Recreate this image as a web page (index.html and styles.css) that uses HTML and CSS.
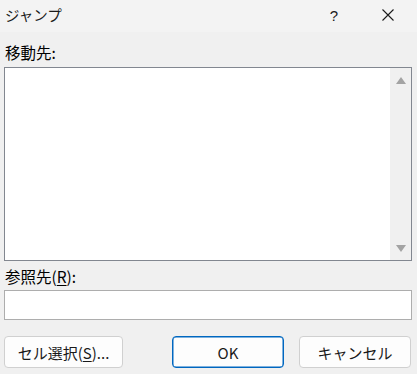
FILE: index.html
```html
<!DOCTYPE html>
<html lang="ja">
<head>
<meta charset="utf-8">
<link rel="stylesheet" href="styles.css">
</head>
<body>
<div class="dialog">
  <div class="titlebar">
    <span class="title">ジャンプ</span>
    <span class="help">?</span>
    <span class="close"><svg width="12" height="12" viewBox="0 0 12 12"><path d="M0.5 0.5 L11.5 11.5 M11.5 0.5 L0.5 11.5" stroke="#1a1a1a" stroke-width="1.1" fill="none"/></svg></span>
  </div>
  <div class="content">
    <div class="label">移動先:</div>
    <div class="listbox">
      <div class="listarea"></div>
      <div class="scrollbar">
        <svg width="10" height="7" viewBox="0 0 10 7"><path d="M5 0 L10 7 L0 7 Z" fill="#a3a3a3"/></svg>
        <svg width="10" height="7" viewBox="0 0 10 7"><path d="M0 0 L10 0 L5 7 Z" fill="#a3a3a3"/></svg>
      </div>
    </div>
    <div class="label ref">参照先(<u>R</u>):</div>
    <div class="input"></div>
    <div class="buttons">
      <button class="btn sel">セル選択(<u>S</u>)...</button>
      <button class="btn ok">OK</button>
      <button class="btn cancel">キャンセル</button>
    </div>
  </div>
</div>
</body>
</html>
```

FILE: styles.css
```css
html, body {
  margin: 0;
  padding: 0;
  background: #f0f0f0;
}
body {
  font-family: "Noto Sans CJK JP", "Noto Sans", sans-serif;
  color: #000;
  width: 417px;
  height: 374px;
  overflow: hidden;
}
.dialog {
  width: 417px;
  height: 374px;
  display: flex;
  flex-direction: column;
}
.titlebar {
  height: 32px;
  background: #f3f3f3;
  display: flex;
  align-items: center;
  padding-left: 5px;
  box-sizing: border-box;
}
.title {
  font-size: 14.5px;
  color: #1a1a1a;
  flex: 1;
  line-height: 1;
  margin-top: -2px;
}
.help {
  font-family: "Liberation Sans", sans-serif;
  font-size: 15px;
  width: 20px;
  text-align: center;
  margin-right: 38px;
  margin-top: -2px;
  color: #1a1a1a;
}
.close {
  width: 12px;
  height: 12px;
  display: flex;
  margin-right: 23px;
  margin-top: -3px;
}
.content {
  padding: 0 5px 0 4px;
  display: flex;
  flex-direction: column;
}
.label {
  font-size: 15.5px;
  line-height: 20px;
  height: 20px;
  padding-left: 1px;
  margin-top: 10px;
  margin-bottom: 5px;
}
.label u {
  text-decoration-thickness: 1px;
  text-underline-offset: 2px;
}
.label.ref {
  margin-top: 5px;
  margin-bottom: 4px;
}
.listbox {
  height: 194px;
  border: 1px solid #828790;
  background: #fff;
  display: flex;
  box-sizing: border-box;
}
.listarea {
  flex: 1;
}
.scrollbar {
  width: 21px;
  background: #f0f0f0;
  display: flex;
  flex-direction: column;
  justify-content: space-between;
  align-items: center;
  padding: 9px 0 8px;
  box-sizing: border-box;
}
.input {
  height: 30px;
  border: 1px solid #adadad;
  background: #fff;
  box-sizing: border-box;
}
.buttons {
  margin-top: 16px;
  display: flex;
}
.btn {
  height: 32px;
  border: 1px solid #d0d0d0;
  border-radius: 4px;
  background: #fdfdfd;
  font-family: "Noto Sans CJK JP", "Noto Sans", sans-serif;
  font-size: 15px;
  color: #1a1a1a;
  padding: 0;
  box-sizing: border-box;
  width: 119px;
}
.btn u {
  text-underline-offset: 2px;
}
.btn.ok {
  width: 112px;
  margin-left: 49px;
  border: 1px solid #0067c0;
  box-shadow: inset 0 0 0 0.5px #0067c0;
}
.btn.cancel {
  width: 112px;
  margin-left: 15px;
}
```
